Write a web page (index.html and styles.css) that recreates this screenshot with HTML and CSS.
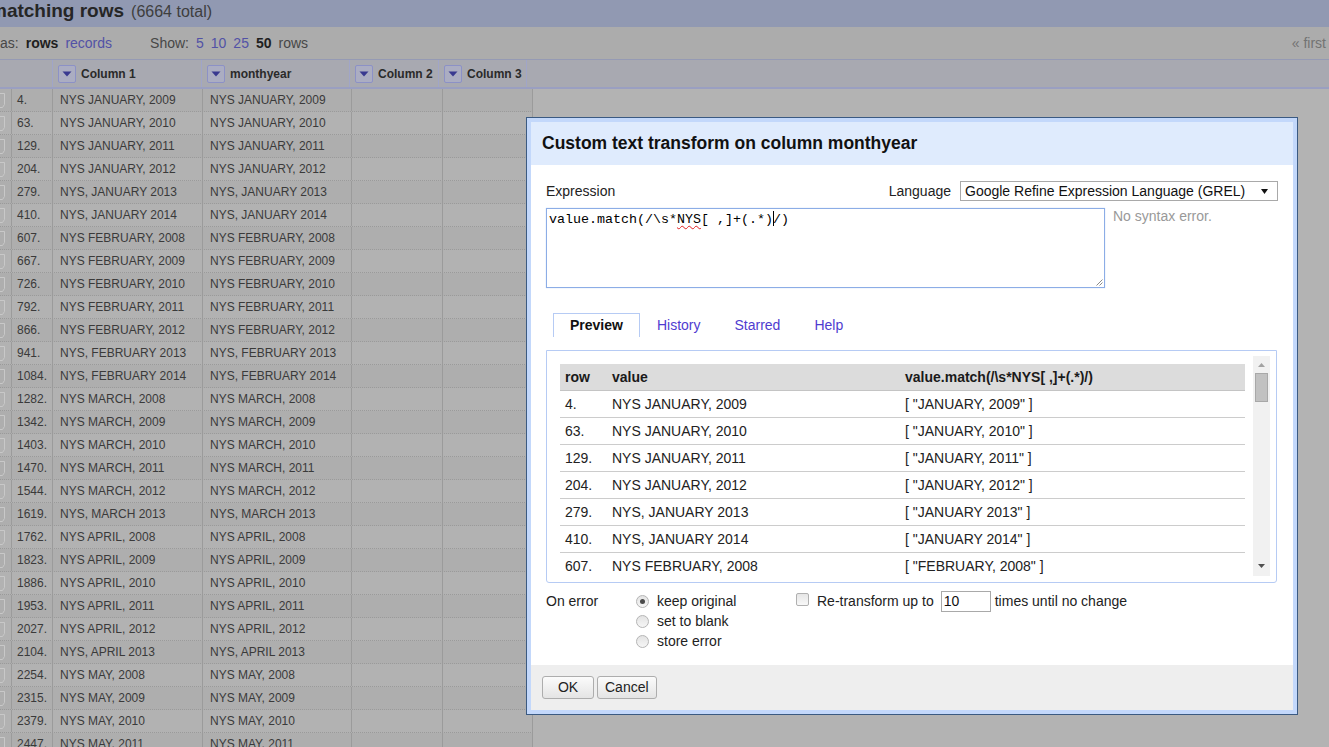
FILE: index.html
```html
<!DOCTYPE html>
<html lang="en">
<head>
<meta charset="utf-8">
<title>Custom text transform on column monthyear</title>
<link rel="stylesheet" href="styles.css">
</head>
<body>
<div class="page">
  <div class="summary"><span class="summary-count">matching rows</span><span class="summary-total">(6664 total)</span></div>
  <div class="viewbar">
    <div class="vb-group"><span class="muted">as:</span><b class="strong">rows</b><span class="link">records</span></div>
    <div class="vb-group vb-show"><span class="muted">Show:</span><span class="link">5</span><span class="link">10</span><span class="link">25</span><b class="strong">50</b><span class="muted">rows</span></div>
    <span class="pager">« first</span>
  </div>
  <div class="col-head">
    <div class="ch-cell ch-lead"></div>
    <div class="ch-cell"><span class="dd"><svg width="10" height="6" viewBox="0 0 10 6"><polygon points="0.5,0.5 9.5,0.5 5,5.5" fill="#393990"/></svg></span>Column 1</div>
    <div class="ch-cell"><span class="dd"><svg width="10" height="6" viewBox="0 0 10 6"><polygon points="0.5,0.5 9.5,0.5 5,5.5" fill="#393990"/></svg></span>monthyear</div>
    <div class="ch-cell"><span class="dd"><svg width="10" height="6" viewBox="0 0 10 6"><polygon points="0.5,0.5 9.5,0.5 5,5.5" fill="#393990"/></svg></span>Column 2</div>
    <div class="ch-cell"><span class="dd"><svg width="10" height="6" viewBox="0 0 10 6"><polygon points="0.5,0.5 9.5,0.5 5,5.5" fill="#393990"/></svg></span>Column 3</div>
    <div class="ch-cell ch-rest"></div>
  </div>
  <div class="data">
    <div class="row"><span class="c-flag"><svg width="8" height="22" viewBox="0 0 8 22"><path d="M0 4.5H4.5V15.5L2.5 18.5H0" fill="none" stroke="#c8c8c8"/></svg></span><span class="c-num">4.</span><span class="c-val">NYS JANUARY, 2009</span><span class="c-val c-my">NYS JANUARY, 2009</span><span></span><span></span></div>
    <div class="row"><span class="c-flag"><svg width="8" height="22" viewBox="0 0 8 22"><path d="M0 4.5H4.5V15.5L2.5 18.5H0" fill="none" stroke="#c8c8c8"/></svg></span><span class="c-num">63.</span><span class="c-val">NYS JANUARY, 2010</span><span class="c-val c-my">NYS JANUARY, 2010</span><span></span><span></span></div>
    <div class="row"><span class="c-flag"><svg width="8" height="22" viewBox="0 0 8 22"><path d="M0 4.5H4.5V15.5L2.5 18.5H0" fill="none" stroke="#c8c8c8"/></svg></span><span class="c-num">129.</span><span class="c-val">NYS JANUARY, 2011</span><span class="c-val c-my">NYS JANUARY, 2011</span><span></span><span></span></div>
    <div class="row"><span class="c-flag"><svg width="8" height="22" viewBox="0 0 8 22"><path d="M0 4.5H4.5V15.5L2.5 18.5H0" fill="none" stroke="#c8c8c8"/></svg></span><span class="c-num">204.</span><span class="c-val">NYS JANUARY, 2012</span><span class="c-val c-my">NYS JANUARY, 2012</span><span></span><span></span></div>
    <div class="row"><span class="c-flag"><svg width="8" height="22" viewBox="0 0 8 22"><path d="M0 4.5H4.5V15.5L2.5 18.5H0" fill="none" stroke="#c8c8c8"/></svg></span><span class="c-num">279.</span><span class="c-val">NYS, JANUARY 2013</span><span class="c-val c-my">NYS, JANUARY 2013</span><span></span><span></span></div>
    <div class="row"><span class="c-flag"><svg width="8" height="22" viewBox="0 0 8 22"><path d="M0 4.5H4.5V15.5L2.5 18.5H0" fill="none" stroke="#c8c8c8"/></svg></span><span class="c-num">410.</span><span class="c-val">NYS, JANUARY 2014</span><span class="c-val c-my">NYS, JANUARY 2014</span><span></span><span></span></div>
    <div class="row"><span class="c-flag"><svg width="8" height="22" viewBox="0 0 8 22"><path d="M0 4.5H4.5V15.5L2.5 18.5H0" fill="none" stroke="#c8c8c8"/></svg></span><span class="c-num">607.</span><span class="c-val">NYS FEBRUARY, 2008</span><span class="c-val c-my">NYS FEBRUARY, 2008</span><span></span><span></span></div>
    <div class="row"><span class="c-flag"><svg width="8" height="22" viewBox="0 0 8 22"><path d="M0 4.5H4.5V15.5L2.5 18.5H0" fill="none" stroke="#c8c8c8"/></svg></span><span class="c-num">667.</span><span class="c-val">NYS FEBRUARY, 2009</span><span class="c-val c-my">NYS FEBRUARY, 2009</span><span></span><span></span></div>
    <div class="row"><span class="c-flag"><svg width="8" height="22" viewBox="0 0 8 22"><path d="M0 4.5H4.5V15.5L2.5 18.5H0" fill="none" stroke="#c8c8c8"/></svg></span><span class="c-num">726.</span><span class="c-val">NYS FEBRUARY, 2010</span><span class="c-val c-my">NYS FEBRUARY, 2010</span><span></span><span></span></div>
    <div class="row"><span class="c-flag"><svg width="8" height="22" viewBox="0 0 8 22"><path d="M0 4.5H4.5V15.5L2.5 18.5H0" fill="none" stroke="#c8c8c8"/></svg></span><span class="c-num">792.</span><span class="c-val">NYS FEBRUARY, 2011</span><span class="c-val c-my">NYS FEBRUARY, 2011</span><span></span><span></span></div>
    <div class="row"><span class="c-flag"><svg width="8" height="22" viewBox="0 0 8 22"><path d="M0 4.5H4.5V15.5L2.5 18.5H0" fill="none" stroke="#c8c8c8"/></svg></span><span class="c-num">866.</span><span class="c-val">NYS FEBRUARY, 2012</span><span class="c-val c-my">NYS FEBRUARY, 2012</span><span></span><span></span></div>
    <div class="row"><span class="c-flag"><svg width="8" height="22" viewBox="0 0 8 22"><path d="M0 4.5H4.5V15.5L2.5 18.5H0" fill="none" stroke="#c8c8c8"/></svg></span><span class="c-num">941.</span><span class="c-val">NYS, FEBRUARY 2013</span><span class="c-val c-my">NYS, FEBRUARY 2013</span><span></span><span></span></div>
    <div class="row"><span class="c-flag"><svg width="8" height="22" viewBox="0 0 8 22"><path d="M0 4.5H4.5V15.5L2.5 18.5H0" fill="none" stroke="#c8c8c8"/></svg></span><span class="c-num">1084.</span><span class="c-val">NYS, FEBRUARY 2014</span><span class="c-val c-my">NYS, FEBRUARY 2014</span><span></span><span></span></div>
    <div class="row"><span class="c-flag"><svg width="8" height="22" viewBox="0 0 8 22"><path d="M0 4.5H4.5V15.5L2.5 18.5H0" fill="none" stroke="#c8c8c8"/></svg></span><span class="c-num">1282.</span><span class="c-val">NYS MARCH, 2008</span><span class="c-val c-my">NYS MARCH, 2008</span><span></span><span></span></div>
    <div class="row"><span class="c-flag"><svg width="8" height="22" viewBox="0 0 8 22"><path d="M0 4.5H4.5V15.5L2.5 18.5H0" fill="none" stroke="#c8c8c8"/></svg></span><span class="c-num">1342.</span><span class="c-val">NYS MARCH, 2009</span><span class="c-val c-my">NYS MARCH, 2009</span><span></span><span></span></div>
    <div class="row"><span class="c-flag"><svg width="8" height="22" viewBox="0 0 8 22"><path d="M0 4.5H4.5V15.5L2.5 18.5H0" fill="none" stroke="#c8c8c8"/></svg></span><span class="c-num">1403.</span><span class="c-val">NYS MARCH, 2010</span><span class="c-val c-my">NYS MARCH, 2010</span><span></span><span></span></div>
    <div class="row"><span class="c-flag"><svg width="8" height="22" viewBox="0 0 8 22"><path d="M0 4.5H4.5V15.5L2.5 18.5H0" fill="none" stroke="#c8c8c8"/></svg></span><span class="c-num">1470.</span><span class="c-val">NYS MARCH, 2011</span><span class="c-val c-my">NYS MARCH, 2011</span><span></span><span></span></div>
    <div class="row"><span class="c-flag"><svg width="8" height="22" viewBox="0 0 8 22"><path d="M0 4.5H4.5V15.5L2.5 18.5H0" fill="none" stroke="#c8c8c8"/></svg></span><span class="c-num">1544.</span><span class="c-val">NYS MARCH, 2012</span><span class="c-val c-my">NYS MARCH, 2012</span><span></span><span></span></div>
    <div class="row"><span class="c-flag"><svg width="8" height="22" viewBox="0 0 8 22"><path d="M0 4.5H4.5V15.5L2.5 18.5H0" fill="none" stroke="#c8c8c8"/></svg></span><span class="c-num">1619.</span><span class="c-val">NYS, MARCH 2013</span><span class="c-val c-my">NYS, MARCH 2013</span><span></span><span></span></div>
    <div class="row"><span class="c-flag"><svg width="8" height="22" viewBox="0 0 8 22"><path d="M0 4.5H4.5V15.5L2.5 18.5H0" fill="none" stroke="#c8c8c8"/></svg></span><span class="c-num">1762.</span><span class="c-val">NYS APRIL, 2008</span><span class="c-val c-my">NYS APRIL, 2008</span><span></span><span></span></div>
    <div class="row"><span class="c-flag"><svg width="8" height="22" viewBox="0 0 8 22"><path d="M0 4.5H4.5V15.5L2.5 18.5H0" fill="none" stroke="#c8c8c8"/></svg></span><span class="c-num">1823.</span><span class="c-val">NYS APRIL, 2009</span><span class="c-val c-my">NYS APRIL, 2009</span><span></span><span></span></div>
    <div class="row"><span class="c-flag"><svg width="8" height="22" viewBox="0 0 8 22"><path d="M0 4.5H4.5V15.5L2.5 18.5H0" fill="none" stroke="#c8c8c8"/></svg></span><span class="c-num">1886.</span><span class="c-val">NYS APRIL, 2010</span><span class="c-val c-my">NYS APRIL, 2010</span><span></span><span></span></div>
    <div class="row"><span class="c-flag"><svg width="8" height="22" viewBox="0 0 8 22"><path d="M0 4.5H4.5V15.5L2.5 18.5H0" fill="none" stroke="#c8c8c8"/></svg></span><span class="c-num">1953.</span><span class="c-val">NYS APRIL, 2011</span><span class="c-val c-my">NYS APRIL, 2011</span><span></span><span></span></div>
    <div class="row"><span class="c-flag"><svg width="8" height="22" viewBox="0 0 8 22"><path d="M0 4.5H4.5V15.5L2.5 18.5H0" fill="none" stroke="#c8c8c8"/></svg></span><span class="c-num">2027.</span><span class="c-val">NYS APRIL, 2012</span><span class="c-val c-my">NYS APRIL, 2012</span><span></span><span></span></div>
    <div class="row"><span class="c-flag"><svg width="8" height="22" viewBox="0 0 8 22"><path d="M0 4.5H4.5V15.5L2.5 18.5H0" fill="none" stroke="#c8c8c8"/></svg></span><span class="c-num">2104.</span><span class="c-val">NYS, APRIL 2013</span><span class="c-val c-my">NYS, APRIL 2013</span><span></span><span></span></div>
    <div class="row"><span class="c-flag"><svg width="8" height="22" viewBox="0 0 8 22"><path d="M0 4.5H4.5V15.5L2.5 18.5H0" fill="none" stroke="#c8c8c8"/></svg></span><span class="c-num">2254.</span><span class="c-val">NYS MAY, 2008</span><span class="c-val c-my">NYS MAY, 2008</span><span></span><span></span></div>
    <div class="row"><span class="c-flag"><svg width="8" height="22" viewBox="0 0 8 22"><path d="M0 4.5H4.5V15.5L2.5 18.5H0" fill="none" stroke="#c8c8c8"/></svg></span><span class="c-num">2315.</span><span class="c-val">NYS MAY, 2009</span><span class="c-val c-my">NYS MAY, 2009</span><span></span><span></span></div>
    <div class="row"><span class="c-flag"><svg width="8" height="22" viewBox="0 0 8 22"><path d="M0 4.5H4.5V15.5L2.5 18.5H0" fill="none" stroke="#c8c8c8"/></svg></span><span class="c-num">2379.</span><span class="c-val">NYS MAY, 2010</span><span class="c-val c-my">NYS MAY, 2010</span><span></span><span></span></div>
    <div class="row"><span class="c-flag"><svg width="8" height="22" viewBox="0 0 8 22"><path d="M0 4.5H4.5V15.5L2.5 18.5H0" fill="none" stroke="#c8c8c8"/></svg></span><span class="c-num">2447.</span><span class="c-val">NYS MAY, 2011</span><span class="c-val c-my">NYS MAY, 2011</span><span></span><span></span></div>
  </div>
</div>

<div class="dialog">
  <div class="dlg-head">Custom text transform on column monthyear</div>
  <div class="dlg-body">
    <div class="expr-top">
      <span class="expr-label">Expression</span>
      <span class="lang-label">Language</span>
      <div class="select"><span class="select-text">Google Refine Expression Language (GREL)</span><svg class="select-arrow" width="7" height="5" viewBox="0 0 7 5"><polygon points="0,0 7,0 3.5,5" fill="#111"/></svg></div>
    </div>
    <div class="expr-mid">
      <div class="expr">value.match(/\s*<span class="misspelt">NYS</span>[ ,]+(.*)<span class="caret"></span>/)<svg class="grip" width="8" height="8" viewBox="0 0 8 8"><path d="M7.5 1.5L1.5 7.5M7.5 4.5L4.5 7.5" stroke="#8a8a8a" stroke-width="1"/></svg></div>
      <div class="status">No syntax error.</div>
    </div>
    <div class="tabs">
      <span class="tab active">Preview</span>
      <span class="tab">History</span>
      <span class="tab">Starred</span>
      <span class="tab">Help</span>
    </div>
    <div class="panel">
      <div class="preview">
        <div class="pv-row pv-head"><span>row</span><span>value</span><span>value.match(/\s*NYS[ ,]+(.*)/)</span></div>
        <div class="pv-row"><span>4.</span><span>NYS JANUARY, 2009</span><span>[ "JANUARY, 2009" ]</span></div>
        <div class="pv-row"><span>63.</span><span>NYS JANUARY, 2010</span><span>[ "JANUARY, 2010" ]</span></div>
        <div class="pv-row"><span>129.</span><span>NYS JANUARY, 2011</span><span>[ "JANUARY, 2011" ]</span></div>
        <div class="pv-row"><span>204.</span><span>NYS JANUARY, 2012</span><span>[ "JANUARY, 2012" ]</span></div>
        <div class="pv-row"><span>279.</span><span>NYS, JANUARY 2013</span><span>[ "JANUARY 2013" ]</span></div>
        <div class="pv-row"><span>410.</span><span>NYS, JANUARY 2014</span><span>[ "JANUARY 2014" ]</span></div>
        <div class="pv-row"><span>607.</span><span>NYS FEBRUARY, 2008</span><span>[ "FEBRUARY, 2008" ]</span></div>
      </div>
      <div class="sb">
        <svg class="sb-up" width="7" height="4" viewBox="0 0 7 4"><polygon points="0,4 3.5,0 7,4" fill="#a3a3a3"/></svg>
        <div class="sb-thumb"></div>
        <div class="sb-space"></div>
        <svg class="sb-down" width="7" height="4" viewBox="0 0 7 4"><polygon points="0,0 7,0 3.5,4" fill="#505050"/></svg>
      </div>
    </div>
    <div class="options">
      <span class="opt-label">On error</span>
      <div class="radios">
        <div class="radio-line"><span class="radio on"></span><span>keep original</span></div>
        <div class="radio-line"><span class="radio"></span><span>set to blank</span></div>
        <div class="radio-line"><span class="radio"></span><span>store error</span></div>
      </div>
      <div class="repeat">
        <span class="check"></span>
        <span class="repeat-text">Re-transform up to</span>
        <span class="num-input">10</span>
        <span>times until no change</span>
      </div>
    </div>
  </div>
  <div class="dlg-foot">
    <button class="btn" type="button">OK</button>
    <button class="btn" type="button">Cancel</button>
  </div>
</div>
</body>
</html>
```

FILE: styles.css
```css
* { box-sizing: border-box; margin: 0; padding: 0; }

html, body {
  width: 1329px;
  height: 747px;
  overflow: hidden;
}

body {
  position: relative;
  background: #b3b3b3;
  font-family: "Liberation Sans", Arial, sans-serif;
  color: #222;
}

.page { width: 1329px; }

/* ---- dimmed page behind the dialog ---- */
.summary {
  height: 27px;
  background: #9199b2;
  display: flex;
  align-items: baseline;
  gap: 7px;
  line-height: 22px;
  white-space: nowrap;
}
.summary-count {
  font-size: 19px;
  font-weight: bold;
  color: #262626;
  margin-left: -10px;
}
.summary-total {
  font-size: 16px;
  color: #3e3e3e;
}

.viewbar {
  height: 33px;
  background: #acacac;
  border-bottom: 1px solid #959ab4;
  display: flex;
  align-items: center;
  font-size: 14px;
  line-height: 16px;
  white-space: nowrap;
}
.vb-group { display: flex; gap: 7px; }
.vb-show { margin-left: 38px; }
.muted { color: #474747; }
.strong { color: #1f1f1f; }
.link { color: #5252a6; }
.pager { margin-left: auto; margin-right: 3px; color: #737373; }

.col-head {
  display: grid;
  grid-template-columns: 53px 149px 148px 89px 88px 1fr;
  height: 29px;
  background: #a8a9b1;
  border-bottom: 2px solid #9a9fc1;
}
.ch-cell {
  display: flex;
  align-items: center;
  gap: 5px;
  padding-left: 5px;
  border-right: 1px solid #a0a5c8;
  font-size: 12px;
  font-weight: bold;
  color: #2a2a2a;
  white-space: nowrap;
}
.ch-rest { border-right: none; }
.dd {
  width: 18px;
  height: 18px;
  border: 1px solid #8c91c6;
  border-radius: 2px;
  background: #abadc2;
  display: flex;
  align-items: center;
  justify-content: center;
}

.data { width: 533px; }
.row {
  display: grid;
  grid-template-columns: 12px 41px 150px 149px 91px 90px;
  height: 23px;
  border-bottom: 1px dotted #9a9a9a;
  background: #aeaeae;
}
.row:nth-child(even) { background: #b2b2b2; }
.row > span {
  border-right: 1px solid #9b9b9b;
  font-size: 12px;
  line-height: 22px;
  color: #3a3a3a;
  white-space: nowrap;
  overflow: hidden;
}
.c-flag { padding-left: 0; }
.c-flag svg { display: block; }
.c-num { padding-left: 5px; }
.c-val { padding-left: 7px; }
.c-my { color: #3d3443; }

/* ---- dialog ---- */
.dialog {
  position: absolute;
  left: 526px;
  top: 117px;
  width: 772px;
  height: 598px;
  border: 1px solid #3b5a82;
  background: #c3d8fb;
  padding: 4px;
  display: flex;
  flex-direction: column;
}
.dlg-head {
  height: 43px;
  background: #dfebfd;
  display: flex;
  align-items: center;
  padding-left: 11px;
  font-size: 17.5px;
  font-weight: bold;
  color: #111;
  white-space: nowrap;
}
.dlg-body {
  height: 500px;
  background: #fff;
  padding: 16px 15px 0 15px;
  display: flex;
  flex-direction: column;
  font-size: 14px;
  color: #222;
}
.dlg-foot {
  height: 45px;
  background: #eeeeee;
  padding: 11px 0 0 11px;
  display: flex;
  gap: 3px;
  align-items: flex-start;
}

.expr-top {
  display: flex;
  align-items: center;
  height: 20px;
  white-space: nowrap;
}
.lang-label { margin-left: auto; margin-right: 9px; }
.select {
  width: 318px;
  height: 20px;
  border: 1px solid #a9a9a9;
  display: flex;
  align-items: center;
  padding-left: 4px;
  padding-right: 9px;
  color: #111;
}
.select-arrow { margin-left: auto; }

.expr-mid {
  display: flex;
  align-items: flex-start;
  gap: 8px;
  margin-top: 7px;
}
.expr {
  position: relative;
  width: 559px;
  height: 80px;
  border: 1px solid #8cade6;
  box-shadow: 0 0 1px #b9cef2;
  padding: 2px;
  font-family: "Liberation Mono", "Courier New", monospace;
  font-size: 13.333px;
  line-height: 15px;
  color: #000;
  white-space: pre;
}
.misspelt {
  text-decoration: underline wavy #e02020;
  text-decoration-thickness: 1px;
  text-underline-offset: 2px;
}
.caret {
  display: inline-block;
  width: 0;
  height: 15px;
  border-left: 1px solid #000;
  margin-right: -1px;
  vertical-align: -3px;
}
.grip { position: absolute; right: 1px; bottom: 1px; }
.status { color: #999; line-height: 16px; white-space: nowrap; }

.tabs {
  display: flex;
  height: 24px;
  margin-top: 25px;
  margin-left: 7px;
}
.tab {
  padding: 0 16px;
  line-height: 22px;
  height: 24px;
  border: 1px solid transparent;
  border-bottom: none;
  color: #4f3cd0;
  white-space: nowrap;
}
.tab.active {
  border-color: #b6cbf4;
  font-weight: bold;
  color: #111;
}

.panel {
  margin-top: 13px;
  width: 731px;
  height: 233px;
  border: 1px solid #b6cbf4;
  border-radius: 0 0 3px 3px;
  padding: 5px 6px 6px 6px;
  display: flex;
}
.preview {
  flex: 1;
  padding: 8px 8px 0 7px;
  overflow: hidden;
}
.pv-row {
  display: grid;
  grid-template-columns: 47px 293px 1fr;
  height: 27px;
  border-bottom: 1px solid #cccccc;
  line-height: 26px;
  white-space: nowrap;
}
.pv-row > span { padding-left: 5px; overflow: hidden; }
.pv-head {
  background: #dcdcdc;
  font-weight: bold;
  color: #1a1a1a;
  border-bottom-color: #c4c4c4;
}

.sb {
  width: 17px;
  background: #f1f1f1;
  display: flex;
  flex-direction: column;
  align-items: center;
}
.sb-up { margin-top: 7px; flex: none; }
.sb-thumb {
  margin-top: 6px;
  width: 13px;
  height: 29px;
  background: #c1c1c1;
  border: 1px solid #a8a8a8;
  flex: none;
}
.sb-space { flex: 1; }
.sb-down { margin-bottom: 8px; flex: none; }

.options {
  display: flex;
  margin-top: 8px;
  line-height: 20px;
  white-space: nowrap;
}
.opt-label { width: 90px; }
.radios { width: 160px; display: flex; flex-direction: column; }
.radio-line { display: flex; align-items: center; gap: 8px; height: 20px; }
.radio {
  position: relative;
  width: 13px;
  height: 13px;
  border-radius: 50%;
  border: 1px solid #b5b5b5;
  background: linear-gradient(#e3e3e3, #f6f6f6);
  flex: none;
}
.radio.on::after {
  content: "";
  position: absolute;
  left: 3px;
  top: 3px;
  width: 5px;
  height: 5px;
  border-radius: 50%;
  background: #4a4a4a;
}
.repeat { display: flex; align-items: center; height: 20px; }
.check {
  width: 13px;
  height: 13px;
  border: 1px solid #b0b0b0;
  border-radius: 2px;
  background: linear-gradient(#e6e6e6, #f8f8f8);
  margin-right: 8px;
  margin-top: -3px;
}
.num-input {
  width: 50px;
  height: 21px;
  border: 1px solid #a9a9a9;
  padding-left: 2px;
  line-height: 19px;
  margin-left: 7px;
  margin-right: 4px;
  color: #111;
}

.btn {
  height: 23px;
  min-width: 52px;
  padding: 0 7px;
  border: 1px solid #adadad;
  border-radius: 3px;
  background: linear-gradient(#fbfbfb, #e4e4e4);
  font-family: "Liberation Sans", Arial, sans-serif;
  font-size: 14px;
  line-height: 21px;
  color: #222;
  text-align: center;
}
```
